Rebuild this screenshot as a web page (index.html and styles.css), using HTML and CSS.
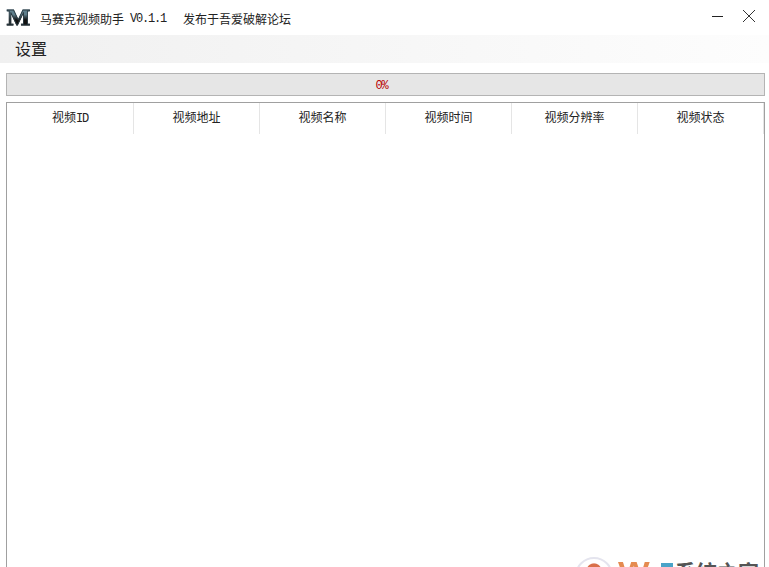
FILE: index.html
```html
<!DOCTYPE html>
<html lang="zh-CN">
<head>
    <meta charset="UTF-8">
    <title>马赛克视频助手</title>
    <link rel="stylesheet" href="styles.css">
</head>
<body>
    <div class="window">
        <div class="titlebar">
            <span class="logo">M</span>
            <span class="title">马赛克视频助手</span>
            <span class="version">V0.1.1</span>
            <span class="title-note">发布于吾爱破解论坛</span>
            <div class="win-buttons">
                <svg width="12" height="12" viewBox="0 0 12 12"><path d="M0 6.5H11" stroke="#222" fill="none"/></svg>
                <svg width="14" height="14" viewBox="0 0 14 14"><path d="M1 1L13 13M13 1L1 13" stroke="#333" fill="none"/></svg>
            </div>
        </div>
        <div class="menubar"><span class="menu-item">设置</span></div>
        <div class="progress">0%</div>
        <div class="table">
            <div class="table-head">
                <div class="cell">视频<span class="latin">ID</span></div>
                <div class="cell">视频地址</div>
                <div class="cell">视频名称</div>
                <div class="cell">视频时间</div>
                <div class="cell">视频分辨率</div>
                <div class="cell">视频状态</div>
            </div>
        </div>
        <!-- watermark of the site the screenshot came from, cut by the window edge -->
        <div class="watermark">
            <span class="wm-circle"></span>
            <span class="wm-w">W</span>
            <span class="wm-bar"></span>
            <span class="wm-text">系统之家</span>
        </div>
    </div>
</body>
</html>
```

FILE: styles.css
```css
* {
    box-sizing: border-box;
}
html, body {
    margin: 0;
    height: 100%;
    overflow: hidden;
    background: #fff;
}
body {
    font-family: "Noto Sans CJK SC", sans-serif;
    font-size: 12px;
    color: #222;
}
.latin, .version, .progress {
    font-family: "Liberation Mono", monospace;
    font-size: 12px;
    letter-spacing: -1.2px;
}
.window {
    position: relative;
    height: 567px;
    overflow: hidden;
    display: flex;
    flex-direction: column;
}
.titlebar {
    height: 35px;
    flex: none;
    display: flex;
    align-items: center;
    padding: 2px 13px 0 6px;
}
.logo {
    width: 25px;
    margin: 0 9px 2px 0;
    font-family: "Liberation Serif", serif;
    font-weight: bold;
    font-size: 23px;
    line-height: 24px;
    text-align: center;
    transform: scaleX(1.08);
    -webkit-text-stroke: 0.8px #2a3a42;
    background: linear-gradient(#5f7f8c 35%, #111 58%);
    -webkit-background-clip: text;
    background-clip: text;
    color: transparent;
}
.version {
    margin-left: 6px;
}
.title-note {
    margin-left: 17px;
}
.win-buttons {
    margin-left: auto;
    margin-bottom: 6px;
    display: flex;
    align-items: center;
    gap: 18px;
}
.menubar {
    height: 28px;
    flex: none;
    display: flex;
    align-items: center;
    padding: 0 0 2px 15px;
    background: linear-gradient(to right, #f0f0f0, #fdfdfd);
}
.menu-item {
    font-size: 16px;
}
.progress {
    height: 23px;
    flex: none;
    margin: 10px 4px 6px 6px;
    padding-right: 8px;
    border: 1px solid #b4b4b4;
    background: #e6e6e6;
    color: #b80000;
    line-height: 24px;
    text-align: center;
}
.table {
    flex: 1;
    margin: 0 4px -10px 6px;
    border: 1px solid #a0a0a0;
}
.table-head {
    display: flex;
    height: 31px;
}
.cell {
    width: 126px;
    border-right: 1px solid #e5e5e5;
    text-align: center;
    line-height: 28px;
}
.cell:first-child {
    width: 127px;
}
.watermark {
    position: absolute;
    left: 575px;
    top: 557px;
    display: flex;
    align-items: flex-start;
}
.wm-circle {
    width: 38px;
    height: 38px;
    margin-right: 5px;
    border: 2px solid #e4e4ee;
    border-radius: 50%;
    background: radial-gradient(circle at 50% 35%, #d9704a 0 7px, #fff 8px);
}
.wm-w {
    width: 29px;
    margin-right: 14px;
    font-family: "Liberation Sans", sans-serif;
    font-weight: bold;
    font-size: 24px;
    line-height: 20px;
    margin-top: 4px;
    color: #e58b50;
    transform: scaleX(1.4);
    transform-origin: left;
}
.wm-bar {
    width: 12px;
    height: 12px;
    margin-top: 6px;
    background: #4aa3c8;
}
.wm-text {
    margin-left: 2px;
    font-weight: bold;
    font-size: 21px;
    line-height: 24px;
    color: #555;
    margin-top: 2px;
}
```
